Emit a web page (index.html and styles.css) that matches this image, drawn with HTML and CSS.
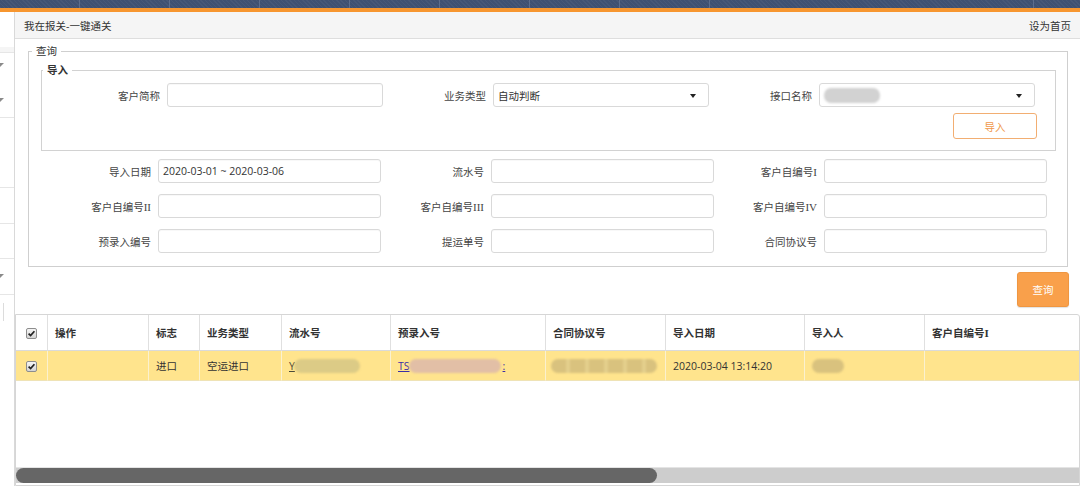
FILE: index.html
```html
<!DOCTYPE html>
<html lang="zh-CN">
<head>
<meta charset="utf-8">
<title>我在报关-一键通关</title>
<link rel="stylesheet" href="styles.css">
</head>
<body>
<header class="topnav">
  <span class="tab"></span><span class="tab"></span><span class="tab"></span><span class="tab"></span>
  <span class="tab"></span><span class="tab"></span><span class="tab"></span><span class="tab"></span>
  <span class="fill"></span>
  <span class="tab-end"></span>
</header>
<div class="accent"></div>
<div class="frame">
  <aside class="sidebar">
    <div class="side-row r-top"></div>
    <div class="side-row r-a"><i class="caret c1"></i><i class="caret c2"></i></div>
    <div class="side-row r-b"></div>
    <div class="side-row r-c"></div>
    <div class="side-row r-d"></div>
    <div class="side-row r-e"><i class="caret c3"></i></div>
    <div class="side-row r-last"><span class="side-input"></span></div>
  </aside>
  <main class="main">
    <div class="titlebar"><span class="title">我在报关-一键通关</span><a class="home">设为首页</a></div>
    <div class="content">
      <fieldset class="query">
        <legend>查询</legend>
        <fieldset class="import">
          <legend>导入</legend>
          <div class="import-grid">
            <div class="field"><label class="lbl">客户简称</label><input class="inp" type="text"></div>
            <div class="field"><label class="lbl">业务类型</label><div class="sel"><span class="sel-text">自动判断</span><i class="arrow"></i></div></div>
            <div class="field"><label class="lbl">接口名称</label><div class="sel"><span class="redact r-if"></span><i class="arrow"></i></div></div>
          </div>
          <div class="import-actions"><button class="btn-import" type="button">导入</button></div>
        </fieldset>
        <div class="query-grid">
          <div class="field"><label class="lbl">导入日期</label><input class="inp" type="text" value="2020-03-01 ~ 2020-03-06"></div>
          <div class="field"><label class="lbl">流水号</label><input class="inp" type="text"></div>
          <div class="field"><label class="lbl">客户自编号<span class="rn">I</span></label><input class="inp" type="text"></div>
          <div class="field"><label class="lbl">客户自编号<span class="rn">II</span></label><input class="inp" type="text"></div>
          <div class="field"><label class="lbl">客户自编号<span class="rn">III</span></label><input class="inp" type="text"></div>
          <div class="field"><label class="lbl">客户自编号<span class="rn">IV</span></label><input class="inp" type="text"></div>
          <div class="field"><label class="lbl">预录入编号</label><input class="inp" type="text"></div>
          <div class="field"><label class="lbl">提运单号</label><input class="inp" type="text"></div>
          <div class="field"><label class="lbl">合同协议号</label><input class="inp" type="text"></div>
        </div>
      </fieldset>
      <div class="query-actions"><button class="btn-query" type="button">查询</button></div>
    </div>
    <div class="grid-wrap">
      <div class="grid-view">
        <table class="grid">
          <colgroup>
            <col class="col-ck"><col class="col-op"><col class="col-flag"><col class="col-type">
            <col class="col-sn"><col class="col-pre"><col class="col-ht"><col class="col-date">
            <col class="col-user"><col class="col-c1">
          </colgroup>
          <thead>
            <tr>
              <th class="ck"><span class="chk"><svg viewBox="0 0 9 9" width="9" height="9"><path d="M1.6 4.6 L3.6 6.6 L7.4 2.2" fill="none" stroke="#222" stroke-width="1.7"/></svg></span></th>
              <th>操作</th><th>标志</th><th>业务类型</th><th>流水号</th><th>预录入号</th>
              <th>合同协议号</th><th>导入日期</th><th>导入人</th><th>客户自编号<span class="rn">I</span></th>
            </tr>
          </thead>
          <tbody>
            <tr class="sel-row">
              <td class="ck"><span class="chk"><svg viewBox="0 0 9 9" width="9" height="9"><path d="M1.6 4.6 L3.6 6.6 L7.4 2.2" fill="none" stroke="#222" stroke-width="1.7"/></svg></span></td>
              <td></td>
              <td>进口</td>
              <td>空运进口</td>
              <td><a class="lnk lnk-sn">Y</a><span class="redact r-sn"></span></td>
              <td><a class="lnk lnk-pre">TS</a><span class="redact r-pre"></span><a class="lnk lnk-pre">:</a></td>
              <td><span class="redact r-ht"></span></td>
              <td>2020-03-04 13:14:20</td>
              <td><span class="redact r-user"></span></td>
              <td></td>
            </tr>
          </tbody>
        </table>
      </div>
      <div class="hscroll"><div class="thumb"></div></div>
    </div>
  </main>
</div>
</body>
</html>
```
FILE: styles.css
```css
* { box-sizing: border-box; }
html, body { margin: 0; height: 100%; }
body {
  font-family: "Open Sans", "Noto Sans CJK SC", sans-serif;
  font-size: 10.5px;
  color: #333;
  background: #fff;
  overflow: hidden;
}
.rn { font-family: "Liberation Serif", serif; font-size: 11px; }

/* top navigation strip */
.topnav {
  height: 8px;
  display: flex;
  background-color: #3f5172;
  background-image: repeating-linear-gradient(45deg, rgba(255,255,255,0.04) 0 1px, transparent 1px 3px);
}
.topnav .tab { width: 90px; border-right: 1px solid #5c6d8d; }
.topnav .tab:first-child { width: 80px; }
.topnav .fill { flex: 1; border-right: 1px solid #5c6d8d; }
.topnav .tab-end { width: 46px; }
.accent { height: 4px; background: #f7962f; }

.frame { display: flex; height: 474px; }

/* left clipped menu */
.sidebar {
  width: 15px;
  flex: none;
  border-right: 1px solid #d9d9d9;
  overflow: hidden;
  display: flex;
  flex-direction: column;
}
.side-row { border-bottom: 1px solid #e6e6e6; display: flex; flex-direction: column; flex: none; }
.side-row.r-top { height: 41px; background: linear-gradient(#fff 0 35px, #f5f5f5 35px); }
.side-row.r-a { height: 65px; }
.side-row.r-b { height: 70px; }
.side-row.r-c { height: 36px; }
.side-row.r-d { height: 35px; }
.side-row.r-e { height: 36px; }
.side-row.r-last { flex: 1; border-bottom: 0; }
.caret {
  display: block;
  width: 0; height: 0;
  margin-left: -4px;
  border-top: 4px solid #8a8a8a;
  border-left: 4px solid transparent;
  border-right: 4px solid transparent;
}
.caret.c1 { margin-top: 10px; }
.caret.c2 { margin-top: 31px; }
.caret.c3 { margin-top: 15px; }
.side-input {
  display: block;
  margin-top: 8px;
  margin-left: 3px;
  width: 12px;
  height: 18px;
  border-left: 1px solid #dcdcdc;
}

.main { flex: 1; min-width: 0; display: flex; flex-direction: column; }

.titlebar {
  height: 27px;
  flex: none;
  background: #f5f5f5;
  border-bottom: 1px solid #dedede;
  display: flex;
  align-items: center;
  justify-content: space-between;
  padding: 0 9px;
  color: #333;
}
.home { color: #333; cursor: pointer; }

.content { padding: 4px 12px 7px 13px; flex: none; }

.query {
  margin: 0;
  min-width: 0;
  border: 1px solid #cfcfcf;
  padding: 3px 11px 13px 12px;
}
.query > legend {
  margin-left: -9px;
  padding: 0 4px;
  line-height: 16px;
  color: #333;
}
.import {
  margin: 0;
  min-width: 0;
  border: 1px solid #d2d2d2;
  padding: 5px 18px 11px 15px;
}
.import > legend {
  margin-left: -14px;
  padding: 0 4px;
  line-height: 16px;
  font-weight: bold;
  color: #333;
}

.import-grid { display: grid; grid-template-columns: repeat(3, 326px); }
.query-grid {
  display: grid;
  grid-template-columns: repeat(3, 333px);
  row-gap: 11px;
  margin-top: 8px;
  padding-left: 7px;
}
.field { display: flex; align-items: center; }
.lbl {
  width: 103px;
  flex: none;
  margin-right: 7px;
  text-align: right;
  color: #444;
  white-space: nowrap;
}
.inp {
  width: 223px;
  height: 24px;
  margin: 0;
  padding: 0 4px;
  font: inherit;
  color: #333;
  background: #fff;
  border: 1px solid #d9d9d9;
  border-radius: 3px;
  box-shadow: inset 0 1px 1px rgba(0,0,0,0.03);
  outline: none;
}
.import .inp { width: 216px; }
.sel {
  width: 216px;
  height: 24px;
  display: flex;
  align-items: center;
  padding: 0 4px;
  border: 1px solid #d9d9d9;
  border-radius: 3px;
  background: #fff;
  position: relative;
}
.import .field:last-child .sel { width: 218px; }
.sel-text { color: #333; }
.arrow {
  position: absolute;
  right: 12px;
  top: 10px;
  width: 0; height: 0;
  border-top: 4px solid #222;
  border-left: 3px solid transparent;
  border-right: 3px solid transparent;
}
.import-actions { display: flex; justify-content: flex-end; margin-top: 6px; }
.btn-import {
  width: 84px;
  height: 26px;
  font: inherit;
  color: #f0984a;
  background: #fff;
  border: 1px solid #f2ae72;
  border-radius: 3px;
  padding: 0;
}

.query-actions { display: flex; justify-content: flex-end; margin-top: 5px; margin-right: -1px; }
.btn-query {
  width: 52px;
  height: 35px;
  font: inherit;
  color: #fff;
  background: #f9a04b;
  border: 1px solid #ef9641;
  border-radius: 3px;
  box-shadow: 0 1px 1px rgba(0,0,0,0.12);
  padding: 0;
}

/* data grid */
.grid-wrap {
  flex: 1;
  border: 1px solid #d6d6d6;
  border-top-right-radius: 3px;
  display: flex;
  flex-direction: column;
  min-width: 0;
}
.grid-view {
  height: 153px;
  overflow: hidden;
  border-bottom: 1px solid #e4e4e4;
  flex: none;
}
.grid {
  width: 1767px;
  table-layout: fixed;
  border-collapse: separate;
  border-spacing: 0;
}
.col-ck { width: 32px; }
.col-op { width: 101px; }
.col-flag { width: 51px; }
.col-type { width: 82px; }
.col-sn { width: 109px; }
.col-pre { width: 155px; }
.col-ht { width: 120px; }
.col-date { width: 139px; }
.col-user { width: 120px; }
.col-c1 { width: 858px; }
.grid th, .grid td {
  padding: 0 7px;
  text-align: left;
  white-space: nowrap;
  overflow: hidden;
}
.grid th {
  height: 36px;
  font-weight: bold;
  color: #333;
  border-right: 1px solid #e0e0e0;
  border-bottom: 1px solid #dadada;
}
.grid td {
  height: 30px;
  color: #333;
  border-right: 1px solid #fbf1cf;
  border-bottom: 1px solid #efe3b6;
}
.grid .ck { text-align: center; padding: 0; }
.sel-row td { background: #ffe48d; }
.chk {
  display: inline-block;
  vertical-align: middle;
  width: 11px;
  height: 11px;
  border: 1px solid #8d8d8d;
  border-radius: 2px;
  background: linear-gradient(#f5f5f5, #d4d4d4);
  line-height: 0;
}
.chk svg { display: block; }
.lnk { text-decoration: underline; vertical-align: middle; }
.lnk-sn { color: #4a4a3a; }
.lnk-pre { color: #3b2ea6; }
.redact {
  display: inline-block;
  vertical-align: middle;
  height: 14px;
  border-radius: 7px;
  filter: blur(1.3px);
}
.r-sn { width: 66px; margin-left: -1px; background: #dccb86; }
.r-pre { width: 92px; margin: 0 2px 0 -1px; background: #e2bfa6; }
.r-ht {
  width: 106px;
  margin-left: -2px;
  background: repeating-linear-gradient(90deg, #d9c27e 0 15px, #e4cf8c 15px 19px);
}
.r-user { width: 32px; background: #d9c27e; }
.r-if { width: 56px; height: 15px; background: #d2d2d2; }

.hscroll {
  height: 15px;
  flex: none;
  background: #cdcdcd;
}
.thumb {
  width: 641px;
  height: 100%;
  background: #666;
  border-radius: 8px;
}
```
